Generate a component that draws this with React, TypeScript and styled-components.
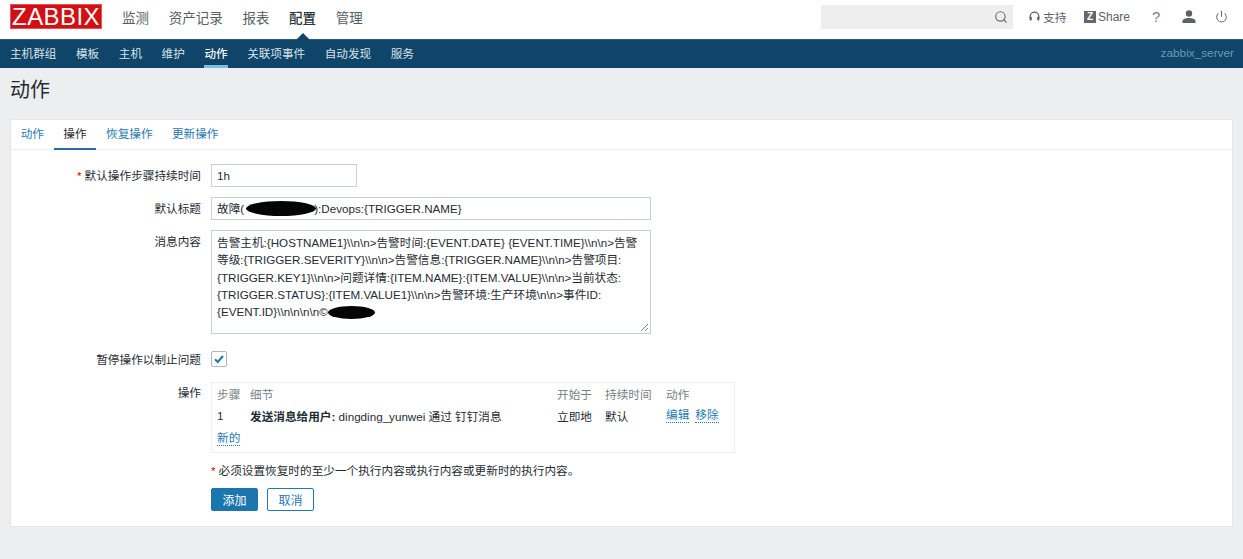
import React from "react";
import styled, { createGlobalStyle } from "styled-components";
import { Search, Power } from "lucide-react";

const FONT = `"Liberation Sans", "Noto Sans CJK SC", sans-serif`;

const Global = createGlobalStyle`
  html, body { margin: 0; padding: 0; background: #edeef0; }
  body { width: 1243px; height: 559px; overflow: hidden; font-family: ${FONT}; font-size: 11.65px; color: #1f2c33; }
  * { box-sizing: border-box; }
`;

const Page = styled.div`display: flex; flex-direction: column; height: 559px;`;

const TopBar = styled.header`
  display: flex; align-items: center; height: 39px; background: #fff; padding: 0 8px 6px 10px;
`;
const Logo = styled.div`
  width: 92px; height: 25px; background: #d40f14; color: #fff; display: flex; align-items: center; justify-content: center;
  font-size: 24px; line-height: 25px; letter-spacing: 0.4px; margin-right: 20px; border: 1px solid #e0575a;
`;
const MainNav = styled.nav`display: flex; gap: 19.7px; font-size: 13.5px;`;
const MainItem = styled.span<{ $active?: boolean }>`
  color: ${p => (p.$active ? "#2a353c" : "#565f65")};
  font-weight: ${p => (p.$active ? 500 : 400)};
  position: relative;
  ${p => p.$active && `&::after { content: ""; position: absolute; left: 50%; margin-left: -8px; bottom: -14px;
    border: 8px solid transparent; border-top: 0; border-bottom-color: #0f4568; }`}
`;
const TopRight = styled.div`display: flex; align-items: center; margin-left: auto; color: #5a6369; font-size: 11.65px;`;
const SearchBox = styled.div`
  width: 192px; height: 24px; background: #eeeeee; display: flex; align-items: center; justify-content: flex-end; padding-right: 5px; margin-right: 16px;
`;
const TopLink = styled.span<{ $w: number }>`
  display: flex; align-items: center; gap: 2px; width: ${p => p.$w}px; white-space: nowrap;
`;
const SupportText = styled.span`margin-left: 1px;`;
const ShareText = styled.span`font-size: 12px;`;
const HelpMark = styled.span`font-size: 15px; line-height: 16px; margin-left: 1px; color: #788187;`;
const ZIcon = styled.span`
  display: inline-block; width: 12px; height: 12px; background: #5f686e; color: #fff; font-size: 10px; line-height: 12px; font-weight: 700; text-align: center;
`;

const SubBar = styled.div`
  display: flex; align-items: stretch; height: 29px; background: #0f4568; padding: 0 9px 0 10px; gap: 19.6px; font-size: 11.6px; box-shadow: inset 0 1px 0 #2c5b80;
`;
const SubItem = styled.span<{ $active?: boolean }>`
  display: flex; align-items: center; color: ${p => (p.$active ? "#f2f6f9" : "#d6e2ea")};
  border-bottom: 3px solid ${p => (p.$active ? "#7cc0e8" : "transparent")};
  padding-top: 1px; font-weight: ${p => (p.$active ? 500 : 400)};
`;
const ServerName = styled.span`margin-left: auto; display: flex; align-items: center; color: #6f99b3; font-size: 11.8px; padding-bottom: 1px;`;

const Title = styled.h1`
  margin: 0; height: 51px; padding: 8px 0 0 10px; font-size: 20px; line-height: 28px; font-weight: 400; color: #1f2c33;
`;

const Card = styled.main`
  margin: 0 10px; height: 408px; background: #fff; border: 1px solid #e4e6e8; display: flex; flex-direction: column;
`;
const Tabs = styled.div`
  display: flex; height: 30px; flex: none; border-bottom: 1px solid #edeef0;
`;
const Tab = styled.span<{ $active?: boolean }>`
  display: flex; align-items: center; padding: 0 9.7px 4px; height: 30px;
  color: ${p => (p.$active ? "#1f2c33" : "#1f79b5")};
  border-bottom: 2px solid ${p => (p.$active ? "#1f6ea8" : "transparent")};
`;

const Form = styled.div`padding-top: 14px; display: flex; flex-direction: column;`;
const Row = styled.div<{ $gap?: number }>`
  display: grid; grid-template-columns: 190px 1fr; column-gap: 10px; margin-bottom: ${p => p.$gap ?? 10}px;
`;
const Label = styled.label<{ $top?: number }>`
  text-align: right; color: #1f2c33; line-height: 14px; padding-top: ${p => p.$top ?? 5}px;
`;
const Req = styled.span`color: #d40000; margin-right: 3px;`;
const Field = styled.div<{ $w: number }>`
  width: ${p => p.$w}px; height: 23px; border: 1px solid #c9ced1; padding: 0 5px; line-height: 21px; color: #1f2c33; white-space: nowrap; overflow: hidden;
`;
const Blob = styled.span<{ $w: number; $h: number; $left?: number; $pull?: number }>`
  display: inline-block; vertical-align: middle; width: ${p => p.$w}px; height: ${p => p.$h}px; background: #050505; border-radius: 50%;
  margin-top: -2px; margin-left: ${p => p.$left ?? 0}px; margin-right: ${p => p.$pull ?? 0}px;
`;
const Area = styled.div`
  position: relative; width: 440px; height: 104px; border: 1px solid #c9ced1; padding: 3px 5px; line-height: 17.3px; color: #1f2c33;
`;
const Grip = styled.svg`position: absolute; right: 1px; bottom: 1px;`;
const Check = styled.span`
  width: 16px; height: 16px; border: 1px solid #aeb6bb; border-radius: 2px; display: flex; align-items: center; justify-content: center; background: #fff;
`;
const OpsBox = styled.div`
  width: 524px; height: 71px; border: 1px solid #edeef0; padding: 0 5px;
`;
const OpsRow = styled.div<{ $head?: boolean }>`
  display: grid; grid-template-columns: 33px 307px 48px 61px 1fr; height: ${p => (p.$head ? 20 : 24)}px; align-items: center; color: ${p => (p.$head ? "#768087" : "#1f2c33")};
`;
const Links = styled.span`display: flex; gap: 6px;`;
const Dotted = styled.a`color: #1f79b5; border-bottom: 1px dotted #1f79b5; line-height: 14px;`;
const NewLine = styled.div`height: 22px; display: flex; align-items: center;`;
const Note = styled.div`margin: 11px 0 10px; line-height: 14px; color: #1f2c33;`;
const Buttons = styled.div`display: flex; gap: 9px;`;
const Btn = styled.button<{ $primary?: boolean }>`
  width: 47px; height: 23px; border-radius: 2px; font: inherit; font-size: 12px; padding: 0;
  background: ${p => (p.$primary ? "#1b75ae" : "#fff")}; color: ${p => (p.$primary ? "#fff" : "#1f79b5")};
  border: 1px solid ${p => (p.$primary ? "#1b75ae" : "#1f79b5")};
`;

const MESSAGE =
  "告警主机:{HOSTNAME1}\\\\n\\n>告警时间:{EVENT.DATE} {EVENT.TIME}\\\\n\\n>告警等级:{TRIGGER.SEVERITY}\\\\n\\n>告警信息:{TRIGGER.NAME}\\\\n\\n>告警项目:{TRIGGER.KEY1}\\\\n\\n>问题详情:{ITEM.NAME}:{ITEM.VALUE}\\\\n\\n>当前状态:{TRIGGER.STATUS}:{ITEM.VALUE1}\\\\n\\n>告警环境:生产环境\\n\\n>事件ID:{EVENT.ID}\\\\n\\n\\n\\n©";

export default function App() {
  return (
    <Page>
      <Global />
      <TopBar>
        <Logo>ZABBIX</Logo>
        <MainNav>
          <MainItem>监测</MainItem>
          <MainItem>资产记录</MainItem>
          <MainItem>报表</MainItem>
          <MainItem $active>配置</MainItem>
          <MainItem>管理</MainItem>
        </MainNav>
        <TopRight>
          <SearchBox><Search size={14} color="#6b7378" /></SearchBox>
          <TopLink $w={55}>
            <svg width="11" height="11" viewBox="0 0 11 11">
              <path d="M1.2 7V5.4a4.3 4.3 0 0 1 8.6 0V7" stroke="#5a6369" strokeWidth="1.3" fill="none" />
              <rect x="0.6" y="5.8" width="2.2" height="3.8" rx="0.8" fill="#5a6369" />
              <rect x="8.2" y="5.8" width="2.2" height="3.8" rx="0.8" fill="#5a6369" />
            </svg>
            <SupportText>支持</SupportText>
          </TopLink>
          <TopLink $w={67}><ZIcon>Z</ZIcon><ShareText>Share</ShareText></TopLink>
          <TopLink $w={31}><HelpMark>?</HelpMark></TopLink>
          <TopLink $w={33}>
            <svg width="14" height="13" viewBox="0 0 14 13"><circle cx="7" cy="3.5" r="3.2" fill="#5a6369" /><path d="M0.5 13V11.2C0.5 9 3.5 8 7 8s6.5 1 6.5 3.2V13Z" fill="#5a6369" /></svg>
          </TopLink>
          <TopLink $w={20}><Power size={13} strokeWidth={1.8} /></TopLink>
        </TopRight>
      </TopBar>
      <SubBar>
        <SubItem>主机群组</SubItem>
        <SubItem>模板</SubItem>
        <SubItem>主机</SubItem>
        <SubItem>维护</SubItem>
        <SubItem $active>动作</SubItem>
        <SubItem>关联项事件</SubItem>
        <SubItem>自动发现</SubItem>
        <SubItem>服务</SubItem>
        <ServerName>zabbix_server</ServerName>
      </SubBar>
      <Title>动作</Title>
      <Card>
        <Tabs>
          <Tab>动作</Tab>
          <Tab $active>操作</Tab>
          <Tab>恢复操作</Tab>
          <Tab>更新操作</Tab>
        </Tabs>
        <Form>
          <Row>
            <Label><Req>*</Req>默认操作步骤持续时间</Label>
            <Field $w={146}>1h</Field>
          </Row>
          <Row>
            <Label>默认标题</Label>
            <Field $w={440}>故障(<Blob $w={70} $h={15} $left={2} $pull={-2} />):Devops:{"{TRIGGER.NAME}"}</Field>
          </Row>
          <Row $gap={17}>
            <Label>消息内容</Label>
            <Area>
              {MESSAGE}<Blob $w={47} $h={13} />
              <Grip width="10" height="10" viewBox="0 0 10 10"><path d="M9 2 2 9M9 6 6 9" stroke="#7d868b" fill="none" /></Grip>
            </Area>
          </Row>
          <Row $gap={15}>
            <Label $top={2}>暂停操作以制止问题</Label>
            <Check>
              <svg width="12" height="12" viewBox="0 0 12 12"><path d="M2 6.2 4.8 9 10 3" stroke="#1f79b5" strokeWidth="2" fill="none" /></svg>
            </Check>
          </Row>
          <Row $gap={0}>
            <Label $top={4}>操作</Label>
            <div>
              <OpsBox>
                <OpsRow $head>
                  <span>步骤</span><span>细节</span><span>开始于</span><span>持续时间</span><span>动作</span>
                </OpsRow>
                <OpsRow>
                  <span>1</span>
                  <span><b>发送消息给用户:</b> dingding_yunwei 通过 钉钉消息</span>
                  <span>立即地</span><span>默认</span>
                  <Links><Dotted>编辑</Dotted><Dotted>移除</Dotted></Links>
                </OpsRow>
                <NewLine><Dotted>新的</Dotted></NewLine>
              </OpsBox>
              <Note><Req>*</Req>必须设置恢复时的至少一个执行内容或执行内容或更新时的执行内容。</Note>
              <Buttons><Btn $primary>添加</Btn><Btn>取消</Btn></Buttons>
            </div>
          </Row>
        </Form>
      </Card>
    </Page>
  );
}
